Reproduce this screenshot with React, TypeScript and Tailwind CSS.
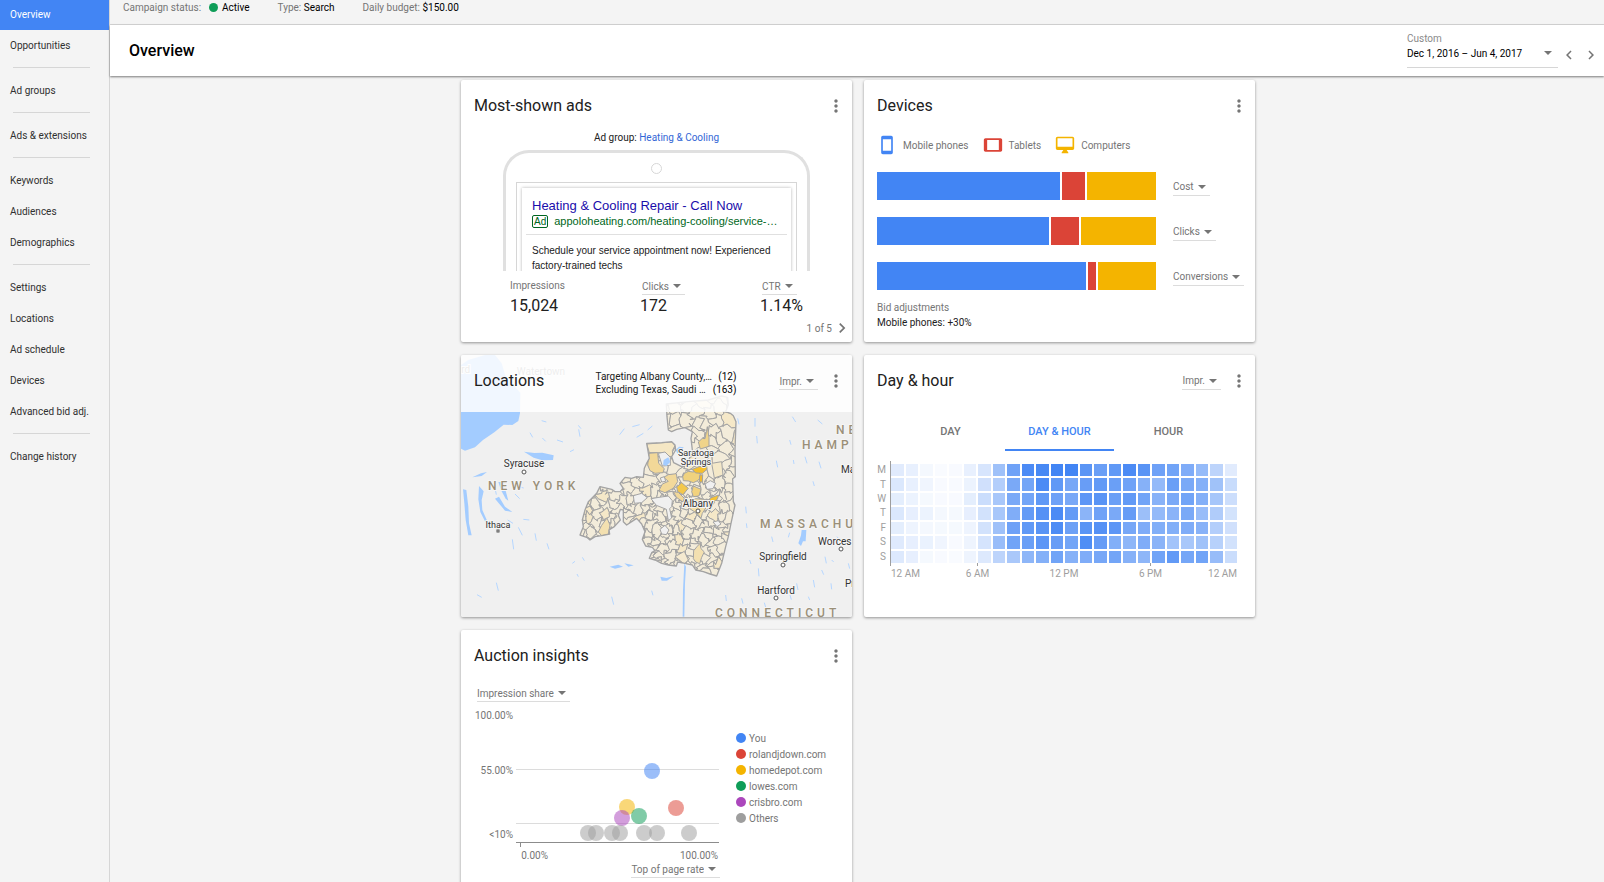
import { useState } from "react"
import type { ReactNode } from "react"
import { MdChevronLeft, MdChevronRight, MdMoreVert, MdStayCurrentPortrait, MdTablet } from "react-icons/md"

const navGroups = [
  ["Overview", "Opportunities"],
  ["Ad groups"],
  ["Ads & extensions"],
  ["Keywords", "Audiences", "Demographics"],
  ["Settings", "Locations", "Ad schedule", "Devices", "Advanced bid adj."],
  ["Change history"],
]

const deviceRows = [
  { metric: "Cost", shares: [549, 71, 207] },
  { metric: "Clicks", shares: [517, 82, 226] },
  { metric: "Conversions", shares: [627, 24, 173] },
]

const heat = [
  { day: "M", values: [16, 12, 6, 3, 4, 12, 21, 51, 76, 95, 97, 100, 100, 87, 79, 84, 95, 88, 77, 75, 68, 56, 35, 16] },
  { day: "T", values: [19, 12, 8, 4, 4, 10, 25, 40, 70, 74, 95, 84, 72, 80, 83, 79, 76, 64, 57, 79, 70, 65, 50, 29] },
  { day: "W", values: [14, 10, 5, 4, 4, 14, 28, 46, 70, 74, 84, 77, 71, 86, 88, 79, 83, 75, 63, 70, 75, 65, 47, 27] },
  { day: "T", values: [19, 13, 10, 6, 5, 13, 24, 46, 67, 82, 90, 95, 82, 61, 76, 70, 81, 52, 57, 62, 70, 54, 42, 23] },
  { day: "F", values: [14, 9, 6, 5, 5, 9, 24, 51, 77, 84, 88, 94, 78, 87, 90, 86, 72, 68, 66, 66, 68, 63, 40, 25] },
  { day: "S", values: [17, 13, 11, 8, 4, 9, 22, 54, 75, 79, 86, 80, 74, 93, 81, 66, 60, 68, 62, 49, 46, 50, 38, 24] },
  { day: "S", values: [18, 13, 5, 4, 3, 9, 18, 35, 45, 60, 65, 75, 64, 68, 72, 74, 64, 60, 75, 83, 73, 75, 55, 28] },
]

const competitors = [
  { name: "You", dot: "bg-[#4285f4]" },
  { name: "rolandjdown.com", dot: "bg-[#db4437]" },
  { name: "homedepot.com", dot: "bg-[#f4b400]" },
  { name: "lowes.com", dot: "bg-[#0f9d58]" },
  { name: "crisbro.com", dot: "bg-[#ab47bc]" },
  { name: "Others", dot: "bg-[#9e9e9e]" },
]

const bubbles = [
  { x: 178, y: 65, fill: "#4285f4" },
  { x: 202, y: 102, fill: "#db4437" },
  { x: 153, y: 101, fill: "#f4b400" },
  { x: 165, y: 110, fill: "#0f9d58" },
  { x: 148, y: 112, fill: "#ab47bc" },
  ...[114, 122, 138, 146, 170, 183, 215].map((x) => ({ x, y: 127, fill: "#9e9e9e" })),
]

function Card({ children }: { children: ReactNode }) {
  return (
    <section className="relative flex min-h-[262px] flex-col overflow-hidden rounded-xs bg-white shadow-[0_1px_3px_rgba(0,0,0,0.4)]">
      {children}
    </section>
  )
}

function CardHeader({ title, children }: { title: string; children?: ReactNode }) {
  return (
    <header className="flex h-[52px] items-center pr-1.5 pl-[13px]">
      <h2 className="flex-1 text-base text-[#212121]">{title}</h2>
      {children}
      <button type="button" aria-label={`${title} options`} className="text-[#757575]">
        <MdMoreVert size={20} />
      </button>
    </header>
  )
}

function Dropdown({ label, options }: { label: string; options: string[] }) {
  return (
    <span className="relative inline-flex border-b border-[#dcdcdc]">
      <select
        aria-label={label}
        className="field-sizing-content h-4 cursor-pointer appearance-none bg-transparent pr-4 text-[#757575] outline-none"
      >
        {options.map((option) => (
          <option key={option}>{option}</option>
        ))}
      </select>
      <svg className="pointer-events-none absolute top-1.5 right-1 text-[#757575]" width="8" height="4" viewBox="0 0 8 4">
        <path d="M0 0h8L4 4z" fill="currentColor" />
      </svg>
    </span>
  )
}

function Sidebar() {
  const [active, setActive] = useState("Overview")

  return (
    <nav className="w-[110px] shrink-0 border-r border-[#d6d6d6] bg-[#f4f4f4]">
      {navGroups.map((group, index) => (
        <ul key={group[0]} className={index > 0 ? "relative pt-3.5" : "-mt-px"}>
          {index > 0 && <li aria-hidden className="absolute top-1.5 right-[19px] left-[13px] border-t border-[#d6d6d6]" />}
          {group.map((item) => (
            <li key={item}>
              <a
                href="#"
                onClick={() => setActive(item)}
                className={`flex h-[31px] items-center pl-2.5 whitespace-nowrap ${
                  item === active ? "bg-[#4285f4] text-white" : "text-[#303030]"
                }`}
              >
                {item}
              </a>
            </li>
          ))}
        </ul>
      ))}
    </nav>
  )
}

function StatusBar() {
  return (
    <div className="flex h-[25px] items-start gap-7 border-b border-[#d6d6d6] bg-[#f4f4f4] pl-[13px] leading-[15px] text-[#757575]">
      <p className="flex items-center">
        Campaign status:
        <span className="mr-1 ml-2 size-[9px] rounded-full bg-[#0f9d58]" />
        <span className="text-black">Active</span>
      </p>
      <p>
        Type: <span className="text-black">Search</span>
      </p>
      <p>
        Daily budget: <span className="text-black">$150.00</span>
      </p>
    </div>
  )
}

function PageHeader() {
  return (
    <header className="relative z-10 flex h-[51px] items-center justify-between bg-white pr-1 pl-[19px] shadow-[0_1px_2px_rgba(0,0,0,0.5)]">
      <h1 className="text-base font-medium text-black">Overview</h1>
      <div className="flex items-end gap-0.5 pb-0.5">
        <div className="relative w-[151px] border-b border-[#d6d6d6]">
          <label htmlFor="range" className="block text-[#8a8a8a]">
            Custom
          </label>
          <select id="range" className="block h-[21px] w-full appearance-none bg-transparent pb-1.5 text-black outline-none">
            <option>Dec 1, 2016 – Jun 4, 2017</option>
          </select>
          <svg className="pointer-events-none absolute right-1.5 bottom-3 text-[#757575]" width="8" height="4" viewBox="0 0 8 4">
            <path d="M0 0h8L4 4z" fill="currentColor" />
          </svg>
        </div>
        <div className="flex gap-1 pb-1 text-[#757575]">
          <button type="button" aria-label="Previous period">
            <MdChevronLeft size={18} />
          </button>
          <button type="button" aria-label="Next period">
            <MdChevronRight size={18} />
          </button>
        </div>
      </div>
    </header>
  )
}

function MostShownAds() {
  return (
    <Card>
      <CardHeader title="Most-shown ads" />
      <p className="text-center leading-3 text-[#212121]">
        Ad group:{" "}
        <a href="#" className="text-[#3367d6]">
          Heating &amp; Cooling
        </a>
      </p>
      {/* Phone preview, cut off at the bottom */}
      <div className="mx-[42px] mt-1.5 h-[121px] overflow-hidden rounded-t-[26px] border-x-3 border-t-3 border-[#e0e0e0] px-2.5 pt-2.5">
        <div className="mx-auto size-[11px] rounded-full border border-[#d6d6d6]" />
        <div className="mt-2 border border-[#d6d6d6] px-[5px] pt-[5px] font-['Liberation_Sans',sans-serif]">
          <div className="h-28 px-1 pt-2.5 shadow-[0_0_3px_rgba(0,0,0,0.3)]">
            <div className="border-b border-[#e0e0e0] px-1.5 pb-1.5">
              <p className="text-[13px] leading-4 text-[#1a0dab]">Heating &amp; Cooling Repair - Call Now</p>
              <p className="flex items-center leading-[14px] text-[#006621]">
                <span className="mr-1.5 rounded-xs border border-[#006621] px-px leading-[11px]">Ad</span>
                <span className="text-[11px] leading-[14px] whitespace-nowrap">
                  appoloheating.com/heating-cooling/service-…
                </span>
              </p>
            </div>
            <p className="pt-2 pl-1.5 leading-[15px] text-[#212121]">
              Schedule your service appointment now! Experienced factory-trained techs
            </p>
          </div>
        </div>
      </div>
      <div className="flex justify-between pt-[7px] pr-[49px] pl-[49px] text-[#757575]">
        <div>
          <p className="h-[17px] leading-4">Impressions</p>
          <p className="text-base leading-[22px] text-[#212121]">15,024</p>
        </div>
        <div>
          <span className="flex pl-0.5">
            <Dropdown label="Ad metric" options={["Clicks"]} />
          </span>
          <p className="text-base leading-[22px] text-[#212121]">172</p>
        </div>
        <div>
          <span className="flex pl-0.5">
            <Dropdown label="Ad rate" options={["CTR"]} />
          </span>
          <p className="text-base leading-[22px] text-[#212121]">1.14%</p>
        </div>
      </div>
      <div className="flex items-center justify-end pt-px text-[#757575]">
        1 of 5
        <button type="button" aria-label="Next ad">
          <MdChevronRight size={20} />
        </button>
      </div>
    </Card>
  )
}

function DevicesCard() {
  return (
    <Card>
      <CardHeader title="Devices" />
      <ul className="flex h-[26px] items-center gap-3.5 pl-[13px] text-[#757575]">
        <li className="flex items-center gap-1.5">
          <MdStayCurrentPortrait size={20} className="text-[#4285f4]" />
          Mobile phones
        </li>
        <li className="flex items-center gap-1.5">
          <MdTablet size={20} className="text-[#db4437]" />
          Tablets
        </li>
        <li className="flex items-center gap-1.5">
          <svg width="20" height="20" viewBox="0 0 24 24" className="text-[#f4b400]">
            <path
              d="M21 2H3c-1.1 0-2 .9-2 2v12c0 1.1.9 2 2 2h7l-2 3v1h8v-1l-2-3h7c1.1 0 2-.9 2-2V4c0-1.1-.9-2-2-2zm0 12H3V4h18v10z"
              fill="currentColor"
              fillRule="evenodd"
            />
          </svg>
          Computers
        </li>
      </ul>
      <div className="mt-3.5 flex flex-col gap-[17px] px-[13px]">
        {deviceRows.map(({ metric, shares }, row) => (
          <div key={metric} className="flex items-center gap-[17px]">
            <div className="flex h-7 flex-1 gap-0.5">
              <div className="bg-[#4285f4]" style={{ flex: shares[0] }} />
              <div className="bg-[#db4437]" style={{ flex: shares[1] }} />
              <div className="bg-[#f4b400]" style={{ flex: shares[2] }} />
            </div>
            <div className="w-[69px] pt-0.5 whitespace-nowrap">
              <Dropdown label={`Metric ${row + 1}`} options={[metric]} />
            </div>
          </div>
        ))}
      </div>
      <div className="px-[13px] pt-2.5 leading-[15px]">
        <p className="text-[#757575]">Bid adjustments</p>
        <p className="text-[#212121]">Mobile phones: +30%</p>
      </div>
    </Card>
  )
}

type Point = [number, number]

const region =
  "M634 162L700 155 760 150 800 138 818 142 820 165 812 185 826 190 835 197 843 215 840 300 841 380 833 386 835 455 840 465 828 520 820 560 812 590 800 640 785 678 765 672 745 665 722 660 712 645 690 640 668 636 664 648 640 645 620 640 600 630 583 625 590 608 600 602 592 592 572 588 562 568 570 545 560 522 545 505 530 515 515 525 505 515 505 480 496 478 490 496 496 510 478 530 462 540 464 552 440 557 420 560 405 570 395 562 375 555 385 530 382 510 390 480 400 455 415 440 425 430 435 410 470 418 480 425 495 425 505 415 495 400 510 382 530 385 545 380 565 382 568 355 575 340 583 325 575 280 620 278 650 275 660 285 662 300 650 320 656 338 680 350 700 335 712 300 708 265 712 245 690 233 665 238 650 245 640 240 636 200Z"

const shaded: [string, string][] = [
  ["#f5e7c4", "M575 282L652 276 660 287 652 302 654 322 640 318 628 308 583 308Z"],
  ["#f2d898", "M582 310L608 308 611 340 628 356 624 368 600 370 585 362 578 345Z"],
  ["#f2d99b", "M612 421L622 402 640 394 626 382 640 374 664 371 668 395 655 415 630 428Z"],
  ["#f0d27e", "M683 380L688 370 700 364 714 366 730 362 739 380 728 392 715 398 700 393 685 392Z"],
  ["#f6c02e", "M712 358L732 350 755 346 756 358 742 370 722 369Z"],
  ["#f0b92e", "M734 376L743 374 742 396 733 396Z"],
  ["#f3c84c", "M665 411L680 398 700 415 684 434 668 425Z"],
  ["#f2d898", "M655 425L670 427 688 445 684 456 664 442Z"],
  ["#f2d27e", "M710 425L715 408 738 418 732 438 715 440Z"],
  ["#f6c335", "M755 460L768 443 791 435 787 448 768 460Z"],
  ["#f0d48a", "M730 276L742 265 750 266 757 230 762 262 762 289 736 297Z"],
  ["#f3e0b0", "M430 546L440 526 456 504 465 525 460 553 440 557Z"],
  ["#f3e0b0", "M716 602L726 590 735 580 738 596 748 606 740 622 734 641 722 636 715 626Z"],
  ["#f3dfa8", "M700 455L722 446 748 448 755 470 742 490 738 505 726 490 704 476Z"],
  ["#f5ead0", "M660 620L688 604 700 630 688 642Z"],
  ["#f4e8c8", "M770 340L800 335 804 375 778 384Z"],
]

const gaps = [
  "M535 437L560 430 577 443 560 458 538 460Z",
  "M588 446L612 442 640 438 652 452 650 470 644 476 650 504 640 512 634 478 604 466Z",
  "M750 402L766 392 782 400 774 416 756 418Z",
  "M615 538L630 526 642 540 634 554 620 552Z",
  "M774 516L790 512 798 522 786 530Z",
  "M610 310L630 306 646 322 646 346 622 348Z",
  "M616 384L628 380 632 394 620 396Z",
]

const lakes = [
  "M18 45L40 30 90 15 120 15 140 40 152 80 196 128 195 190 190 213 172 225 146 224 118 247 84 270 60 292 30 302 18 296Z",
  "M207 305L238 309 262 308 296 316 294 330 262 331 236 323Z",
  "M24 418L34 420 40 470 42 520 50 556 40 556 32 510 28 460Z",
  "M72 408L86 424 80 450 82 480 98 516 90 514 76 486 70 448Z",
  "M130 396L138 396 152 422 160 452 152 446 138 420Z",
  "M120 446L132 440 150 470 172 486 150 482Z",
  "M662 300L672 290 686 292 680 300 668 312Z",
  "M1038 556L1040 540 1054 540 1052 574 1044 574 1038 588 1030 580Z",
  "M688 640L693 650 690 700 688 800 683 800 684 720Z",
  "M464 650L490 644 504 650 480 656Z",
  "M508 640L536 646 520 650Z",
  "M616 680L634 684 656 678 636 692 620 692Z",
  "M52 382L78 370 96 366 80 378Z",
]

const streams =
  "M545 262l20-12M494 254l14-18M532 230l22-6M578 240l14-12M370 226l8 10M260 212l14 4M306 270l18 6M225 248l8 14M262 264l10 10M375 260l-4-22M345 305l12-6M180 432l14 14M190 410l16 4M118 404l6 30M158 510l16 10M205 508l18 2M190 532l12 24M240 550l4 22M276 580l6 18M172 568l4 30M124 698l6 24M66 734l14 8M352 640l8-6M366 672l4 8M388 632l-6-10M470 740l6 24M590 722l4 14M848 205l4 18M900 204v26M905 258l2 22M964 332l4 20M1004 270l4 14M1015 330l2 12M1050 320l6 20M1092 335l6 20M1074 394l4 14M872 470l2 20M874 520l2 14M884 630l4 12M910 655l2 24M950 560l4 16M1000 562l4-14M1090 560l8 18M1110 620l4 20M1100 660l6 14M1128 700l2 18M1075 690l4 22M1025 700l4 20M1005 735l4 14M928 758l4 14M860 745l4 16M1146 560l8 10M1130 630l6 6M1180 640l4 16M1060 740l4 10M812 735l2 18M1088 210l14 12M1012 200l10 16"

// Shared noise keeps the borders of neighbouring cells aligned
const wobble = ([x, y]: Point): string => {
  const dx = 5 * Math.sin(x * 0.41 + y * 0.23) + 4 * Math.sin(y * 0.77)
  const dy = 5 * Math.cos(x * 0.29 - y * 0.37) + 4 * Math.sin(x * 0.83)
  return `${(x + dx).toFixed(1)} ${(y + dy).toFixed(1)}`
}

function buildCells() {
  let seed = 7
  const random = () => {
    seed = (seed * 16807) % 2147483647
    return seed / 2147483647
  }

  const sites: Point[] = []
  let y = 130
  while (y < 700) {
    const step = y < 400 ? 35 : 25
    for (let x = 360; x < 870; x += step) {
      sites.push([x + random() * step, y + random() * step])
    }
    y += step
  }

  return sites.map(([sx, sy]) => {
    let cell: Point[] = [
      [sx - 60, sy - 60],
      [sx + 60, sy - 60],
      [sx + 60, sy + 60],
      [sx - 60, sy + 60],
    ]
    sites.forEach(([ox, oy]) => {
      const nx = ox - sx
      const ny = oy - sy
      if ((nx === 0 && ny === 0) || Math.hypot(nx, ny) > 120) return
      const side = ([px, py]: Point) => (px - (sx + ox) / 2) * nx + (py - (sy + oy) / 2) * ny
      const next: Point[] = []
      cell.forEach((a, i) => {
        const b = cell[(i + 1) % cell.length]
        const da = side(a)
        const db = side(b)
        if (da <= 0) next.push(a)
        if (da * db < 0) {
          const t = da / (da - db)
          next.push([a[0] + (b[0] - a[0]) * t, a[1] + (b[1] - a[1]) * t])
        }
      })
      cell = next
    })
    const outline = cell.flatMap((a, i) => {
      const b = cell[(i + 1) % cell.length]
      return [0, 1 / 3, 2 / 3].map((t) => wobble([a[0] + (b[0] - a[0]) * t, a[1] + (b[1] - a[1]) * t]))
    })
    return { d: `M${outline.join("L")}Z`, fill: random() > 0.88 ? "#f5e8c8" : "#f3ecda" }
  })
}

const cells = buildCells()

const cities = [
  { name: "Syracuse", x: 63, y: 112, dot: 117 },
  { name: "Springfield", x: 322, y: 205, dot: 210 },
  { name: "Hartford", x: 315, y: 239, dot: 243 },
  { name: "Albany", x: 237, y: 152, dot: 156 },
]

function RegionMap() {
  return (
    <svg className="block w-full bg-[#f0f0f0]" viewBox="0 0 391 262" role="img" aria-label="Targeted locations">
      <defs>
        <clipPath id="region">
          <path d={region} />
        </clipPath>
      </defs>
      <g transform="translate(-6 -5) scale(0.33333)">
        {lakes.map((d) => (
          <path key={d} d={d} fill="#a3ccff" />
        ))}
        <path d={streams} stroke="#b5d6ff" strokeWidth="3" fill="none" />
        <g clipPath="url(#region)" stroke="#a3a3a3" strokeWidth="3" strokeLinejoin="round">
          {cells.map(({ d, fill }) => (
            <path key={d} d={d} fill={fill} />
          ))}
          {shaded.map(([fill, d]) => (
            <path key={d} d={d} fill={fill} />
          ))}
          {gaps.map((d) => (
            <path key={d} d={d} fill="#f0f0f0" />
          ))}
        </g>
        <path d={region} fill="none" stroke="#a3a3a3" strokeWidth="4" strokeLinejoin="round" />
        <path d="M626 330L640 322 646 336 634 348 624 344Z" fill="#a3ccff" />
      </g>
      <g fill="#333" stroke="#f5f5f5" strokeWidth="2" paintOrder="stroke" textAnchor="middle" fontSize="10">
        {cities.map(({ name, x, y }) => (
          <text key={name} x={x} y={y}>
            {name}
          </text>
        ))}
        <text x="37" y="173" fontSize="9">
          Ithaca
        </text>
        <text x="235" y="101" fontSize="9">
          Saratoga
        </text>
        <text x="235" y="110" fontSize="9">
          Springs
        </text>
        <text x="80" y="20" fill="#888">
          Watertown
        </text>
        <text x="2" y="18" fill="#888">
          ard
        </text>
        <g textAnchor="start">
          <text x="380" y="118">
            Ma
          </text>
          <text x="357" y="190">
            Worces
          </text>
          <text x="384" y="232">
            Pr
          </text>
        </g>
      </g>
      <g fill="#fff" stroke="#555">
        {cities.map(({ name, x, dot }) => (
          <circle key={name} cx={x} cy={dot} r="2" />
        ))}
        <circle cx="380" cy="194" r="2" />
        <rect x="36" y="175" width="2" height="2" />
      </g>
      <g
        className="tracking-[4px]"
        fill="#9a8f78"
        stroke="#f5f5f5"
        strokeWidth="2"
        paintOrder="stroke"
        fontSize="12"
        fontWeight="500"
      >
        <text x="27" y="135">
          NEW YORK
        </text>
        <text x="375" y="79">
          NE
        </text>
        <text x="341" y="94">
          HAMP
        </text>
        <text x="299" y="173">
          MASSACHU
        </text>
        <text x="254" y="262">
          CONNECTICUT
        </text>
      </g>
    </svg>
  )
}

function LocationsCard() {
  return (
    <Card>
      <RegionMap />
      <header className="absolute inset-x-0 top-0 flex h-[57px] items-center bg-white/85 pr-1.5 pb-1.5 pl-[13px]">
        <h2 className="flex-1 text-base text-[#212121]">Locations</h2>
        <dl className="mr-[43px] w-[141px] pt-1 leading-[13px] text-[#212121]">
          <div className="flex justify-between">
            <dt>Targeting Albany County,…</dt>
            <dd className="text-black">(12)</dd>
          </div>
          <div className="flex justify-between">
            <dt>Excluding Texas, Saudi …</dt>
            <dd className="text-black">(163)</dd>
          </div>
        </dl>
        <span className="mr-2 pt-0.5">
          <Dropdown label="Location metric" options={["Impr."]} />
        </span>
        <button type="button" aria-label="Locations options" className="text-[#757575]">
          <MdMoreVert size={20} />
        </button>
      </header>
    </Card>
  )
}

function DayHourCard() {
  const [tab, setTab] = useState("DAY & HOUR")

  return (
    <Card>
      <CardHeader title="Day & hour">
        <span className="mr-2">
          <Dropdown label="Day and hour metric" options={["Impr."]} />
        </span>
      </CardHeader>
      <div role="tablist" className="mx-8 mt-1 grid grid-cols-3">
        {["DAY", "DAY & HOUR", "HOUR"].map((name) => (
          <button
            key={name}
            type="button"
            role="tab"
            aria-selected={tab === name}
            onClick={() => setTab(name)}
            className={`h-10 border-b-2 pt-1 text-[11px] font-medium ${
              tab === name ? "border-[#4285f4] text-[#4285f4]" : "border-transparent text-[#757575]"
            }`}
          >
            {name}
          </button>
        ))}
      </div>
      <div className="mt-2.5 mr-[18px] ml-3.5 flex text-[#9e9e9e]">
        <div className="flex w-[13px] flex-col gap-0.5 border-r border-[#9e9e9e] pt-[3px] pr-1 pb-[3px]">
          {heat.map(({ day }, row) => (
            <span key={row} className="flex flex-1 items-center justify-end leading-3">
              {day}
            </span>
          ))}
        </div>
        <div className="flex h-[105px] flex-1 flex-col gap-0.5 pt-[3px]">
          {heat.map(({ values }, row) => (
            <div key={row} className="flex flex-1 gap-0.5">
              {values.map((value, hour) => (
                <div key={hour} className="flex-1 bg-[#4285f4]" style={{ opacity: value / 100 }} />
              ))}
            </div>
          ))}
          {/* Axis ticks at 6 AM and 6 PM */}
          <div className="-mt-0.5 flex h-[3px] *:border-[#9e9e9e]">
            <span className="w-1/4 border-r" />
            <span className="w-1/2 border-r" />
          </div>
        </div>
      </div>
      <div className="mr-[18px] ml-[27px] flex leading-4 whitespace-nowrap text-[#9e9e9e]">
        <span className="w-1/8">12 AM</span>
        <span className="w-1/4 text-center">6 AM</span>
        <span className="w-1/4 text-center">12 PM</span>
        <span className="w-1/4 text-center">6 PM</span>
        <span className="flex w-1/8 justify-end">12 AM</span>
      </div>
    </Card>
  )
}

function AuctionInsights() {
  return (
    <Card>
      <CardHeader title="Auction insights" />
      <div className="pt-[3px] pl-4">
        <Dropdown label="Vertical axis" options={["Impression share"]} />
      </div>
      <div className="flex pt-1 pl-[13px]">
        <div className="w-[246px]">
          <svg className="block w-full" viewBox="0 0 246 155" role="img" aria-label="Impression share by top of page rate">
            <g fill="#757575" fontSize="10" textAnchor="end">
              <text x="39" y="13">
                100.00%
              </text>
              <text x="39" y="68">
                55.00%
              </text>
              <text x="39" y="132">
                &lt;10%
              </text>
              <text x="74" y="153">
                0.00%
              </text>
              <text x="244" y="153">
                100.00%
              </text>
            </g>
            <path d="M42 63.5h203M42 117.5h203" stroke="#dcdcdc" />
            <path d="M42 136.5h203M46.5 137v4" stroke="#8c8c8c" fill="none" />
            {bubbles.map(({ x, y, fill }) => (
              <circle key={`${x}-${y}`} cx={x} cy={y} r="8" fill={fill} fillOpacity="0.53" />
            ))}
          </svg>
          <div className="flex justify-end pb-3.5">
            <Dropdown label="Horizontal axis" options={["Top of page rate"]} />
          </div>
        </div>
        <ul className="pt-6 pl-4 text-[#757575]">
          {competitors.map(({ name, dot }) => (
            <li key={name} className="flex h-4 items-center gap-[3px]">
              <span className={`size-2.5 rounded-full ${dot}`} />
              {name}
            </li>
          ))}
        </ul>
      </div>
    </Card>
  )
}

export default function App() {
  return (
    <div className="flex h-screen overflow-hidden bg-[#f4f4f4] font-[Roboto,sans-serif] text-[10px]">
      <Sidebar />
      <div className="flex min-w-0 flex-1 flex-col">
        <StatusBar />
        <PageHeader />
        <main className="flex-1 overflow-y-auto pt-1 pl-0.5 [scrollbar-width:none]">
          <div className="mx-auto grid w-full max-w-[794px] grid-cols-1 gap-x-3 gap-y-[13px] md:grid-cols-2">
            <MostShownAds />
            <DevicesCard />
            <LocationsCard />
            <DayHourCard />
            <AuctionInsights />
          </div>
        </main>
      </div>
    </div>
  )
}
